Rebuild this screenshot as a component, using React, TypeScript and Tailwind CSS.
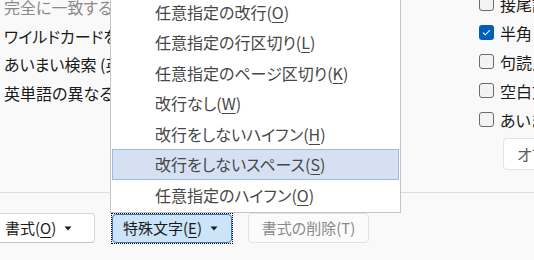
import React from 'react';

// Items of the special-character dropdown
const menuItems = [
    { label: '任意指定の改行', key: 'O' },
    { label: '任意指定の行区切り', key: 'L' },
    { label: '任意指定のページ区切り', key: 'K' },
    { label: '改行なし', key: 'W' },
    { label: '改行をしないハイフン', key: 'H' },
    { label: '改行をしないスペース', key: 'S', active: true },
    { label: '任意指定のハイフン', key: 'O' },
];

const leftOptions = [
    { label: '完全に一致する単語だけを検索する', disabled: true },
    { label: 'ワイルドカードを使用する' },
    { label: 'あいまい検索 (英)' },
    { label: '英単語の異なる活用形も検索する' },
];

const rightOptions = [
    { label: '接尾語が一致する単語を検索する', checked: false },
    { label: '半角と全角を区別する', checked: true },
    { label: '句読点を無視する', checked: false },
    { label: '空白文字を無視する', checked: false },
    { label: 'あいまい検索 (日)', checked: false },
];

function Caret() {
    return (
        <svg width="8" height="5" viewBox="0 0 8 5" className="shrink-0">
            <path d="M0.5 0.5 L7.5 0.5 L4 4.5 Z" fill="#1a1a1a" />
        </svg>
    );
}

function Checkbox({ checked }: { checked: boolean }) {
    if (checked) {
        return (
            <span className="w-[15px] h-[15px] rounded-[3px] bg-[#005fb8] flex items-center justify-center shrink-0">
                <svg width="9" height="7" viewBox="0 0 9 7">
                    <path d="M1 3.6 L3.3 5.8 L8 1.2" stroke="white" strokeWidth="1.1" fill="none" />
                </svg>
            </span>
        );
    }
    return <span className="w-[15px] h-[15px] rounded-[3px] border border-[#6b6b6b] bg-[#f3f3f3] shrink-0" />;
}

function AccessLabel({ text, k }: { text: string; k: string }) {
    return (
        <span>
            {text}(<span className="underline underline-offset-[3px] decoration-1">{k}</span>)
        </span>
    );
}

export default function App() {
    return (
        <div className="relative w-[534px] h-[260px] overflow-hidden bg-[#f9f9f9] text-[16px] text-[#1a1a1a] font-['Noto_Sans_CJK_JP',sans-serif] [font-feature-settings:'palt']">
            {/* Upper options area */}
            <div className="h-[192px] flex">
                {/* left column is covered by the dropdown from x=110 */}
                <div className="w-[110px] shrink-0 overflow-hidden pl-[4px] -mt-[7px] flex flex-col">
                    {leftOptions.map((o, i) => (
                        <div key={i} className={`h-[28.5px] flex items-center whitespace-nowrap ${o.disabled ? 'text-[#8a8a8a]' : ''}`}>
                            {o.label}
                        </div>
                    ))}
                </div>
                <div className="w-[369px] shrink-0" />
                <div className="shrink-0 -mt-[11px] flex flex-col">
                    {rightOptions.map((o, i) => (
                        <div key={i} className="h-[29px] flex items-center whitespace-nowrap">
                            <Checkbox checked={o.checked} />
                            <span className="ml-[6px]">{o.label}</span>
                        </div>
                    ))}
                    <button className="mt-[4px] ml-[24px] h-[32px] w-[120px] rounded-[4px] border border-[#e3e3e3] bg-white text-[#5c5c5c] text-left pl-[13px] whitespace-nowrap">
                        オプション(S)...
                    </button>
                </div>
            </div>

            {/* Separator */}
            <div className="border-t border-[#dedede]" />

            {/* Bottom buttons */}
            <div className="mt-[20px] flex items-start">
                <button className="-ml-[6px] w-[101px] h-[30px] shrink-0 rounded-[4px] border border-[#d6d6d6] border-b-[#c4c4c4] bg-white flex items-center pl-[10px] gap-[8px] text-[15px]">
                    <AccessLabel text="書式" k="O" />
                    <Caret />
                </button>
                <span className="ml-[16px] shrink-0 border border-dotted border-black">
                    <button className="w-[120px] h-[29px] rounded-[4px] border border-[#3c78c0] bg-[#cce4f7] flex items-center pl-[10px] gap-[8px] text-[15px]">
                        <AccessLabel text="特殊文字" k="E" />
                        <Caret />
                    </button>
                </span>
                <button className="ml-[15px] w-[121px] h-[30px] shrink-0 rounded-[4px] border border-[#e2e2e2] bg-[#fbfbfb] text-[#8a8a8a] text-[15px] flex items-center justify-center">
                    書式の削除(T)
                </button>
            </div>

            {/* Open dropdown menu */}
            <div className="absolute left-[110px] top-[-6.5px] w-[291px] border border-[#c4c4c4] bg-white px-[1px] py-[2px]">
                {menuItems.map((m, i) => (
                    <div
                        key={i}
                        className={`h-[30.5px] flex items-center pl-[42px] border whitespace-nowrap text-[#474747] ${m.active ? 'bg-[#d5e1f3] border-[#9db9e6]' : 'border-transparent'}`}
                    >
                        <AccessLabel text={m.label} k={m.key} />
                    </div>
                ))}
            </div>
        </div>
    );
}
